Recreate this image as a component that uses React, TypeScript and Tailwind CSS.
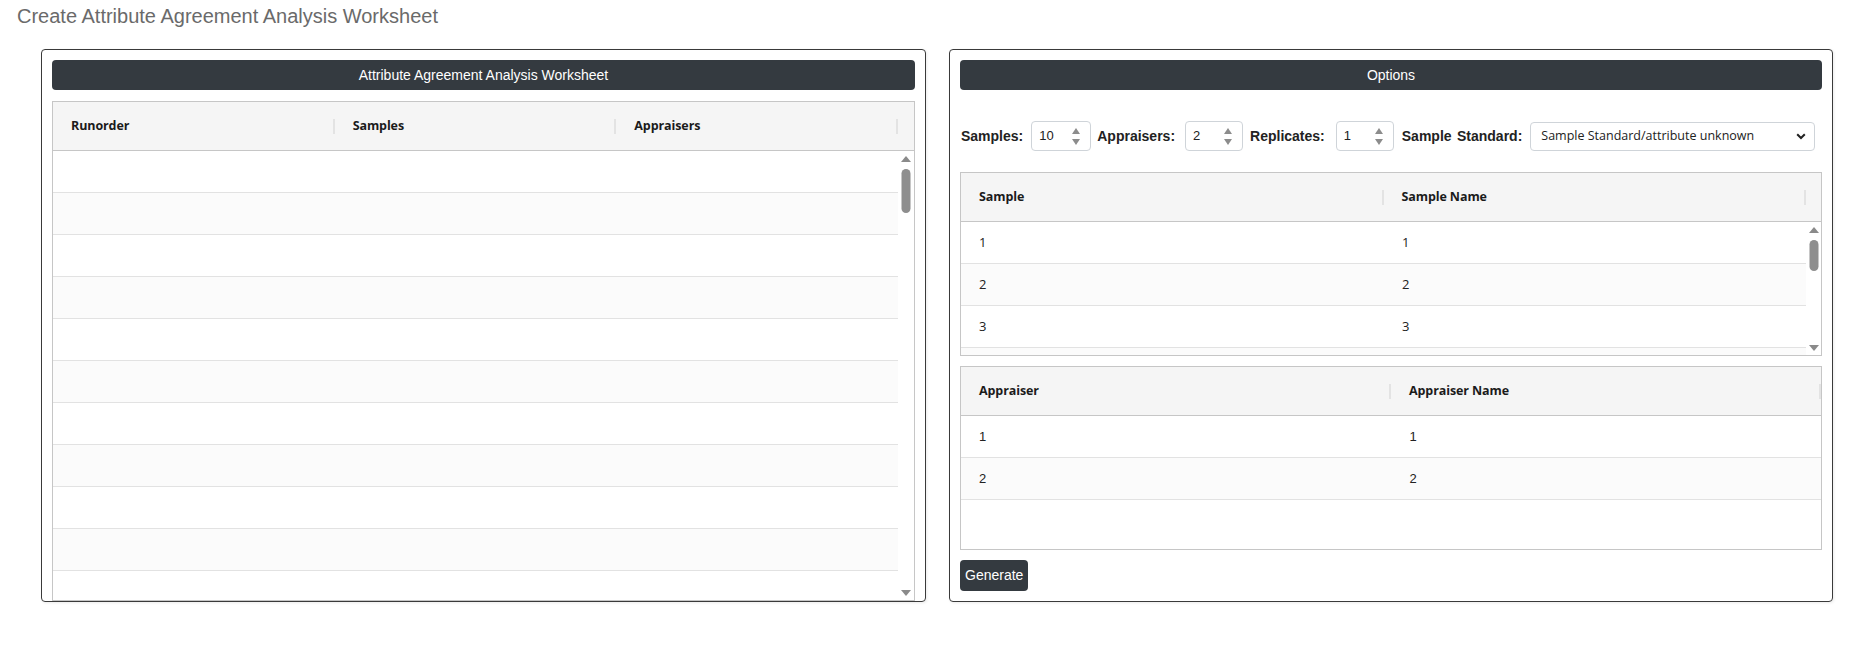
import React from "react";

const arial = "font-['Liberation_Sans',Arial,sans-serif]";
const segoe = "font-['Open_Sans','Noto_Sans',sans-serif]";

function ScrollArrows({ thumbTop, thumbHeight }: { thumbTop: number; thumbHeight: number }) {
  // custom scrollbar drawn on the right side of a grid body
  return (
    <div className="relative h-full w-full">
      <svg className="absolute left-1/2 top-[5px] -translate-x-1/2" width="10" height="6" viewBox="0 0 10 6">
        <polygon points="0,6 5,0 10,6" fill="#8a8a8a" />
      </svg>
      <div
        className="absolute left-1/2 w-[9px] -translate-x-1/2 rounded-full bg-[#8e8e8e]"
        style={{ top: thumbTop, height: thumbHeight }}
      />
      <svg className="absolute bottom-[4px] left-1/2 -translate-x-1/2" width="10" height="6" viewBox="0 0 10 6">
        <polygon points="0,0 10,0 5,6" fill="#8a8a8a" />
      </svg>
    </div>
  );
}

function HeaderCell({ label }: { label: string }) {
  return (
    <div className="flex flex-1 items-center justify-between pl-[18px]">
      <span className={`${segoe} text-[12.5px] font-bold tracking-[-0.1px] text-[#1b1b1b]`}>{label}</span>
      <div className="h-[15px] w-[2px] bg-[#e3e3e3]" />
    </div>
  );
}

function Spinner({ value, width }: { value: string; width: string }) {
  return (
    <div
      className={`flex h-[30px] ${width} items-center justify-between rounded-[4px] border border-[#cfd4d9] bg-white pl-[7px] pr-[10px]`}
    >
      <span className={`${arial} text-[13px] text-[#222]`}>{value}</span>
      <svg width="8" height="17" viewBox="0 0 8 17">
        <polygon points="0,6 4,0 8,6" fill="#8c8c8c" />
        <polygon points="0,11 8,11 4,17" fill="#8c8c8c" />
      </svg>
    </div>
  );
}

function Label({ text, wide }: { text: string; wide?: boolean }) {
  return (
    <span
      className={`${arial} text-[14px] font-bold text-[#222] whitespace-nowrap ${wide ? "[word-spacing:1.5px]" : ""}`}
    >
      {text}
    </span>
  );
}

export default function App() {
  const leftRows = Array.from({ length: 11 });
  const sampleRows = ["1", "2", "3", ""];
  const appraiserRows = ["1", "2"];

  return (
    <div className="h-[647px] w-[1856px] overflow-hidden bg-white">
      {/* Page title */}
      <div className={`${arial} pl-[17px] pt-[4px] text-[20px] leading-[24px] text-[#6a6a6a]`}>
        Create Attribute Agreement Analysis Worksheet
      </div>

      <div className="ml-[41px] mt-[21px] flex gap-[23px]">
        {/* Worksheet panel */}
        <div className="flex h-[553px] w-[885px] flex-col rounded-[4px] border border-[#3a3a3a] px-[10px] pt-[10px] shadow-[1px_1px_3px_rgba(0,0,0,0.08)]">
          <div
            className={`${arial} flex h-[30px] shrink-0 items-center justify-center rounded-[4px] bg-[#343a40] text-[14px] text-white`}
          >
            Attribute Agreement Analysis Worksheet
          </div>
          <div className="mt-[11px] flex min-h-0 flex-1 flex-col overflow-hidden border border-b-0 border-[#c6c6c6]">
            <div className="flex h-[49px] shrink-0 border-b border-[#c6c6c6] bg-[#f5f5f5]">
              <HeaderCell label="Runorder" />
              <HeaderCell label="Samples" />
              <HeaderCell label="Appraisers" />
              <div className="w-[16px]" />
            </div>
            <div className="flex min-h-0 flex-1 border-b border-[#c6c6c6]">
              <div className="min-h-0 flex-1 overflow-hidden">
                {leftRows.map((_, i) => (
                  <div
                    key={i}
                    className={`h-[42px] border-b border-[#e2e2e2] ${i % 2 === 1 ? "bg-[#fbfbfb]" : "bg-white"}`}
                  />
                ))}
              </div>
              <div className="w-[16px]">
                <ScrollArrows thumbTop={18} thumbHeight={44} />
              </div>
            </div>
          </div>
        </div>

        {/* Options panel */}
        <div className="flex h-[553px] w-[884px] flex-col rounded-[4px] border border-[#3a3a3a] px-[10px] pt-[10px] shadow-[1px_1px_3px_rgba(0,0,0,0.08)]">
          <div
            className={`${arial} flex h-[30px] shrink-0 items-center justify-center rounded-[4px] bg-[#343a40] text-[14px] text-white`}
          >
            Options
          </div>

          <div className="mt-[31px] flex h-[30px] items-center pl-[1px]">
            <Label text="Samples:" />
            <div className="ml-[8px] mr-[6px]">
              <Spinner value="10" width="w-[60px]" />
            </div>
            <Label text="Appraisers:" />
            <div className="ml-[10px] mr-[7px]">
              <Spinner value="2" width="w-[58px]" />
            </div>
            <Label text="Replicates:" />
            <div className="ml-[11px] mr-[8px]">
              <Spinner value="1" width="w-[58px]" />
            </div>
            <Label text="Sample Standard:" wide />
            <div
              className={`${segoe} ml-[8px] flex h-[29px] w-[285px] items-center justify-between rounded-[4px] border border-[#cfd4d9] bg-white pl-[10px] pr-[8px] text-[12.5px] text-[#222]`}
            >
              <span>Sample Standard/attribute unknown</span>
              <svg width="10" height="7" viewBox="0 0 10 7">
                <path d="M1.2 1.2 L5 5 L8.8 1.2" fill="none" stroke="#222" strokeWidth="2" />
              </svg>
            </div>
          </div>

          {/* Sample grid */}
          <div className="mt-[21px] flex h-[184px] shrink-0 flex-col border border-[#c6c6c6]">
            <div className="flex h-[49px] shrink-0 border-b border-[#c6c6c6] bg-[#f5f5f5]">
              <HeaderCell label="Sample" />
              <HeaderCell label="Sample Name" />
              <div className="w-[15px]" />
            </div>
            <div className="flex min-h-0 flex-1">
              <div className="min-h-0 flex-1 overflow-hidden">
                {sampleRows.map((v, i) => (
                  <div
                    key={i}
                    className={`flex h-[42px] items-center border-b border-[#e2e2e2] ${segoe} text-[13px] text-[#222] ${
                      i % 2 === 1 ? "bg-[#fbfbfb]" : "bg-white"
                    }`}
                  >
                    <div className="flex-1 pl-[18px]">{v}</div>
                    <div className="flex-1 pl-[19px]">{v}</div>
                  </div>
                ))}
              </div>
              <div className="w-[15px]">
                <ScrollArrows thumbTop={18} thumbHeight={31} />
              </div>
            </div>
          </div>

          {/* Appraiser grid */}
          <div className="mt-[10px] flex h-[184px] shrink-0 flex-col border border-[#c6c6c6]">
            <div className="flex h-[49px] shrink-0 border-b border-[#c6c6c6] bg-[#f5f5f5]">
              <HeaderCell label="Appraiser" />
              <HeaderCell label="Appraiser Name" />
            </div>
            <div className="min-h-0 flex-1">
              {appraiserRows.map((v, i) => (
                <div
                  key={i}
                  className={`flex h-[42px] items-center border-b border-[#e2e2e2] ${arial} text-[13px] text-[#222] ${
                    i % 2 === 1 ? "bg-[#fbfbfb]" : "bg-white"
                  }`}
                >
                  <div className="flex-1 pl-[18px]">{v}</div>
                  <div className="flex-1 pl-[19px]">{v}</div>
                </div>
              ))}
            </div>
          </div>

          <div className="mt-[10px]">
            <button
              className={`${arial} h-[31px] rounded-[4px] bg-[#343a40] px-[5px] text-[14px] text-white`}
            >
              Generate
            </button>
          </div>
        </div>
      </div>
    </div>
  );
}
